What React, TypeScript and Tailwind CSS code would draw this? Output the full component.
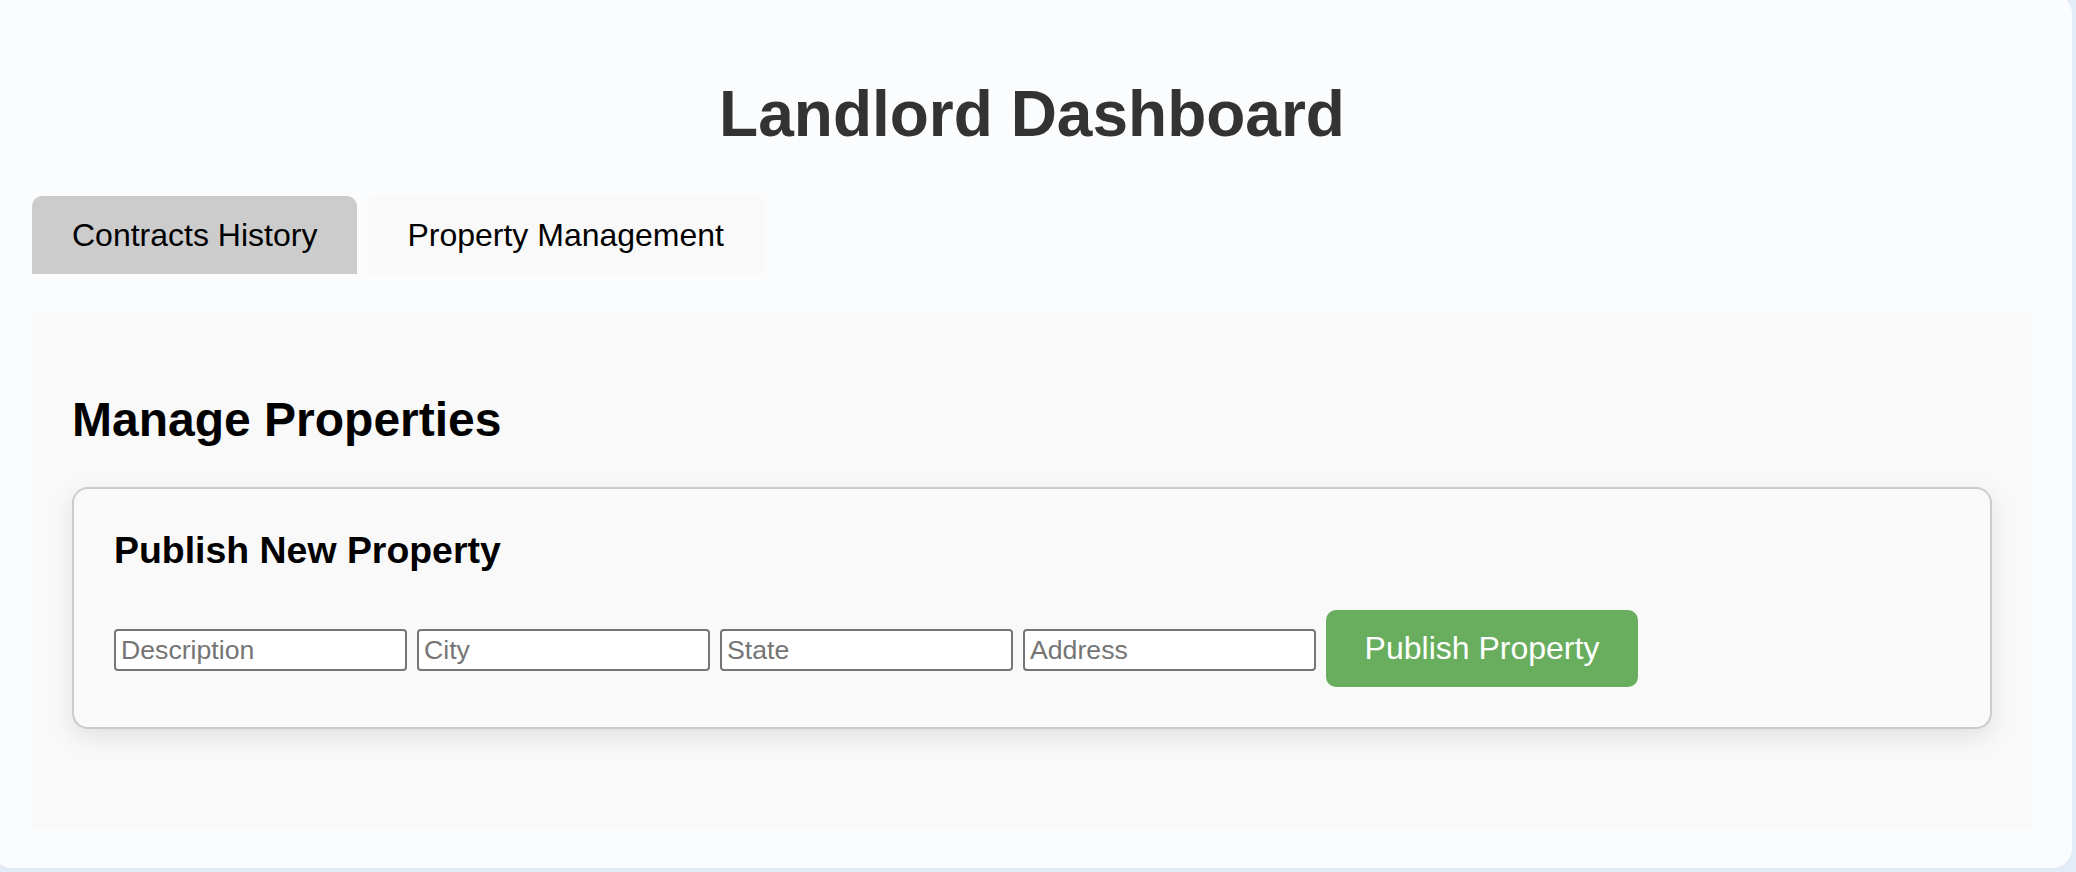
import { useState } from "react";
import clsx from "clsx";

type Tab = "contracts" | "properties";

const fields = ["Description", "City", "State", "Address"];

export default function App() {
  const [tab, setTab] = useState<Tab>("properties");
  const [form, setForm] = useState<Record<string, string>>({});

  return (
    <div
      className="w-full h-[872px] overflow-hidden bg-[#e3ecf6]"
      style={{ fontFamily: '"Liberation Sans", Arial, sans-serif' }}
    >
      <div className="-ml-[8px] -mt-[6px] w-[2080px] h-[874px] rounded-[20px] bg-[#fbfcfe] px-[40px] pt-[84px]">
        <h1 className="text-center text-[64px] leading-[1.15] font-bold text-[#333] mb-[44px]">
          Landlord Dashboard
        </h1>

        <div className="flex gap-[10px]">
          <button
            onClick={() => setTab("contracts")}
            className={clsx(
              "h-[78px] px-[40px] text-[32px] text-black rounded-t-[10px]",
              "bg-[#cccccc]"
            )}
          >
            Contracts History
          </button>
          <button
            onClick={() => setTab("properties")}
            className={clsx(
              "h-[78px] px-[40px] text-[32px] text-black rounded-t-[10px]",
              "bg-[#f9f9f9]"
            )}
          >
            Property Management
          </button>
        </div>

        <div className="mt-[38px] h-[518px] rounded-[8px] bg-[#f9f9f9] px-[40px] pt-[40px]">
          {tab === "properties" || tab === "contracts" ? (
            <>
              <h2 className="mt-[40px] mb-[40px] text-[48px] leading-[1.15] font-bold text-black">
                Manage Properties
              </h2>
              <div
                className={clsx(
                  "border-2 border-[#cccccc] rounded-[16px] bg-[#f9f9f9]",
                  "p-[40px] shadow-[0_8px_24px_rgba(0,0,0,0.1)]"
                )}
              >
                <h3 className="text-[37.44px] leading-[1.15] font-bold text-black mb-[38px]">
                  Publish New Property
                </h3>
                <div className="flex items-center">
                  {fields.map((f) => (
                    <input
                      key={f}
                      placeholder={f}
                      value={form[f] ?? ""}
                      onChange={(e) =>
                        setForm((prev) => ({ ...prev, [f]: e.target.value }))
                      }
                      className={clsx(
                        "w-[293px] h-[42px] mt-[4px] mr-[10px] px-[5px] bg-white",
                        "border-2 border-[#767676] rounded-[4px]",
                        "text-[26.67px] text-black placeholder:text-[#757575]"
                      )}
                    />
                  ))}
                  <button className="w-[312px] h-[77px] rounded-[10px] bg-[#69ae5e] text-white text-[32px]">
                    Publish Property
                  </button>
                </div>
              </div>
            </>
          ) : null}
        </div>
      </div>
    </div>
  );
}
